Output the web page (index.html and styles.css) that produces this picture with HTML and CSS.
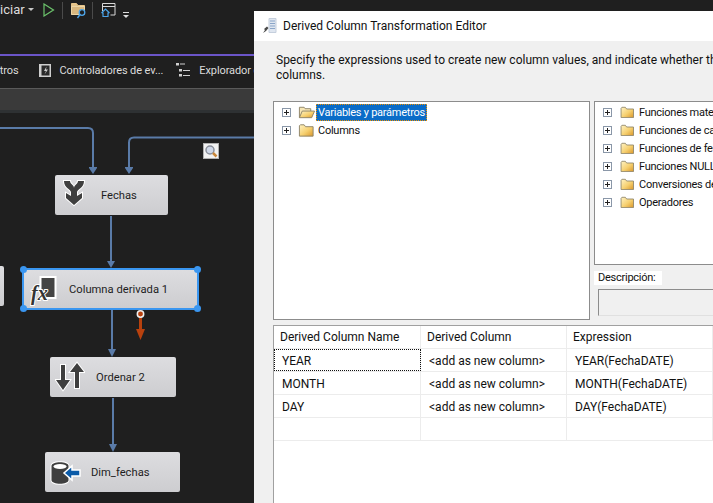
FILE: index.html
```html
<!DOCTYPE html>
<html lang="es">
<head>
  <meta charset="UTF-8" />
  <title>Derived Column Transformation Editor</title>
  <link rel="stylesheet" href="styles.css">
</head>
<body>

<svg class="defs" width="0" height="0">
  <defs>
    <linearGradient id="folder-fill" x1="0" y1="0" x2="1" y2="1">
      <stop offset="0" stop-color="#fff3c4"/>
      <stop offset="0.55" stop-color="#f6d070"/>
      <stop offset="1" stop-color="#d9962a"/>
    </linearGradient>
    <g id="closed-folder">
      <path d="M1.500 13.500V2.500l1-1h4l1.500 2h8v10z" fill="url(#folder-fill)" stroke="#8d8468"/>
    </g>
  </defs>
</svg>

<div class="ide">
  <div class="toolbar">
    <span class="tb-text">iciar</span>
    <span class="caret"></span>
    <svg class="tb-play" width="12" height="14" viewBox="0 0 12 14"><path d="M1 1 L1 13 L10.500 7 Z" fill="none" stroke="#6cc36c" stroke-width="1.200"/></svg>
    <span class="tb-sep"></span>
    <svg class="tb-icon" width="16" height="16" viewBox="0 0 16 16"><path d="M.5 11.500V.5h5l1.500 2h6.500v4" fill="#e6c48a" stroke="#e6c48a"/><path d="M.5 3.500h13v8H.5z" fill="#d9b77e" stroke="#ecd5a5"/><circle cx="11" cy="9.500" r="2.800" fill="#1f1f1f" stroke="#4aa3e8" stroke-width="1.300"/><path d="M9 11.500 L6.500 15" stroke="#4aa3e8" stroke-width="1.400"/></svg>
    <span class="tb-sep"></span>
    <svg class="tb-icon" width="15" height="14" viewBox="0 0 15 14"><path d="M1.500 8V.5h12.500v11.500H9.500M1.500 3.500h12.500" fill="none" stroke="#d8d8d8"/><path d="M.5 10 L4.500 6 L8.500 10 M2 9.500V13.500h5V9.500" fill="#1f1f1f" stroke="#4aa3e8" stroke-width="1.200"/></svg>
    <span class="tb-more"></span>
  </div>
  <div class="tabs">
    <span class="tab tab-first">etros</span>
    <span class="tab tab-events">
      <svg width="12" height="13" viewBox="0 0 12 13"><rect width="12" height="13" fill="#cfcfcf"/><rect x="2.500" y="1.500" width="8" height="10" fill="#2a2a2a"/><path d="M7.500 2.500 L5 7h2L5.500 10.500 L9 5.500H7z" fill="#cfcfcf"/></svg>
      Controladores de ev...
    </span>
    <span class="tab tab-explorer">
      <svg width="14" height="14" viewBox="0 0 14 14"><path d="M0 0h3v2.500H0zM3 6h3v2.500H3zM3 11h3v2.500H3z" fill="#d0d0d0"/><path d="M4 1h5M7 7.500h7M7 12.500h7" stroke="#d0d0d0"/></svg>
      Explorador d
    </span>
  </div>
  <div class="subbar"></div>

  <div class="canvas">
    <svg class="wires" width="254" height="390" viewBox="0 0 254 390">
      <g fill="none" stroke="#5a7ba8" stroke-width="2">
        <path d="M0 15 H88 Q93 15 93 20 V55"/>
        <path d="M254 24.500 H134 Q129 24.500 129 29.500 V55"/>
        <path d="M111 103 V150"/>
        <path d="M112 197 V238"/>
        <path d="M113 285 V333"/>
      </g>
      <g fill="#5a7ba8">
        <path d="M89 54 H97 V55 L93 61 L89 55 Z"/>
        <path d="M125 54 H133 V55 L129 61 L125 55 Z"/>
        <path d="M107 148 H115 L111 155 Z"/>
        <path d="M108 236 H116 L112 244 Z"/>
        <path d="M109 331 H117 L113 339 Z"/>
      </g>
      <path d="M140.500 201 V218" stroke="#b8410e" stroke-width="3"/>
      <path d="M136 216 H145 L140.500 227 Z" fill="#b8410e"/>
      <circle cx="140.500" cy="201" r="3.200" fill="#b8410e" stroke="#f0f0f0" stroke-width="1.500"/>
    </svg>

    <div class="zoom-btn">
      <svg width="14" height="14" viewBox="0 0 14 14"><circle cx="6" cy="6" r="4" fill="#cfd8e8" stroke="#8a8f9a" stroke-width="1.500"/><path d="M9 9 L12.500 12.500" stroke="#c9873a" stroke-width="2.500"/></svg>
    </div>

    <div class="node node-stub"></div>

    <div class="node node-fechas">
      <svg class="node-icon" width="24" height="28" viewBox="0 0 24 28"><path class="glyph" d="M2 2H8C8 5 12 6 12 9C12 6 16 5 16 2H22C22 9 15.500 10 15 13V17L20 14V19L12 26L4 19V14L9 17V13C8.500 10 2 9 2 2Z"/></svg>
      <span class="node-label">Fechas</span>
    </div>

    <div class="node node-columna">
      <span class="handle h-tl"></span><span class="handle h-tr"></span><span class="handle h-bl"></span><span class="handle h-br"></span>
      <svg class="node-icon" width="28" height="30" viewBox="0 0 28 30"><rect x="10.500" y="1" width="15" height="21" fill="#444" stroke="#fff" stroke-width="2"/><text x="1" y="24" class="fx-glyph">fx</text></svg>
      <span class="node-label">Columna derivada 1</span>
    </div>

    <div class="node node-ordenar">
      <svg class="node-icon" width="30" height="31" viewBox="0 0 30 31"><path class="glyph" d="M6 4h4v15h5L8 29L1 19h5z"/><path class="glyph" d="M20 27V11h-5L22 2l7 9h-5v16z"/></svg>
      <span class="node-label">Ordenar 2</span>
    </div>

    <div class="node node-dim">
      <svg class="node-icon" width="32" height="24" viewBox="0 0 32 24"><path class="glyph" d="M1.500 5c0-5 17-5 17 0v14c0 5-17 5-17 0z"/><ellipse cx="10" cy="5.500" rx="6.500" ry="2.500" fill="#fff"/><path d="M30 9h-8V5l-8 7 8 7v-4h8z" fill="#0a5aa8" stroke="#fff" stroke-width="1.500"/></svg>
      <span class="node-label">Dim_fechas</span>
    </div>
  </div>
</div>

<div class="dialog">
  <div class="dlg-title">
    <svg width="16" height="16" viewBox="0 0 16 16"><path d="M7 .5h7v14H7z" fill="#dfe6f0" stroke="#c5cfdd"/><path d="M8 3h5M8 5.500h5M8 8h5M8 10.500h5" stroke="#8aa5c8"/><path d="M1 15 L3 12 L2 11 L5 8.500 L6.500 10 L4 13 Z" fill="#4a4a4a"/></svg>
    <span>Derived Column Transformation Editor</span>
  </div>
  <div class="dlg-body">
    <p class="dlg-intro">Specify the expressions used to create new column values, and indicate whether the<br>columns.</p>

    <div class="panes">
      <div class="tree tree-left">
        <div class="tree-row">
          <span class="plus"></span>
          <svg class="folder" width="17" height="14" viewBox="0 0 18 14"><path d="M1.500 13V2h5l1 1.500h6V6" fill="#f7e6b4" stroke="#8d8468"/><path d="M1.500 13 L4.500 6h13l-3 7z" fill="url(#folder-fill)" stroke="#8d8468"/></svg>
          <span class="tree-label selected">Variables y parámetros</span>
        </div>
        <div class="tree-row">
          <span class="plus"></span>
          <svg class="folder" width="17" height="14" viewBox="0 0 18 14"><use href="#closed-folder"/></svg>
          <span class="tree-label">Columns</span>
        </div>
      </div>
      <div class="side">
        <div class="tree tree-right">
          <div class="tree-row"><span class="plus"></span><svg class="folder" width="17" height="12" viewBox="0 0 18 14"><use href="#closed-folder"/></svg><span class="tree-label">Funciones matemáticas</span></div>
          <div class="tree-row"><span class="plus"></span><svg class="folder" width="17" height="12" viewBox="0 0 18 14"><use href="#closed-folder"/></svg><span class="tree-label">Funciones de cadena</span></div>
          <div class="tree-row"><span class="plus"></span><svg class="folder" width="17" height="12" viewBox="0 0 18 14"><use href="#closed-folder"/></svg><span class="tree-label">Funciones de fecha</span></div>
          <div class="tree-row"><span class="plus"></span><svg class="folder" width="17" height="12" viewBox="0 0 18 14"><use href="#closed-folder"/></svg><span class="tree-label">Funciones NULL</span></div>
          <div class="tree-row"><span class="plus"></span><svg class="folder" width="17" height="12" viewBox="0 0 18 14"><use href="#closed-folder"/></svg><span class="tree-label">Conversiones de tipo</span></div>
          <div class="tree-row"><span class="plus"></span><svg class="folder" width="17" height="12" viewBox="0 0 18 14"><use href="#closed-folder"/></svg><span class="tree-label">Operadores</span></div>
        </div>
        <div class="desc-label">Descripción:</div>
        <div class="desc-box"></div>
      </div>
    </div>

    <div class="grid">
      <div class="grid-row grid-head"><div>Derived Column Name</div><div>Derived Column</div><div>Expression</div></div>
      <div class="grid-row"><div class="focused">YEAR</div><div>&lt;add as new column&gt;</div><div>YEAR(FechaDATE)</div></div>
      <div class="grid-row"><div>MONTH</div><div>&lt;add as new column&gt;</div><div>MONTH(FechaDATE)</div></div>
      <div class="grid-row"><div>DAY</div><div>&lt;add as new column&gt;</div><div>DAY(FechaDATE)</div></div>
      <div class="grid-row"><div></div><div></div><div></div></div>
    </div>
  </div>
</div>

</body>
</html>
```

FILE: styles.css
```css
* {
  box-sizing: border-box;
}
html, body {
  margin: 0;
  height: 100%;
}
body {
  display: flex;
  width: 713px;
  height: 503px;
  overflow: hidden;
  background-color: #1f1f1f;
  font-family: Roboto, "Liberation Sans", Arial, sans-serif;
  font-size: 11.2px;
}
.defs {
  position: absolute;
}

/* left side, the designer */
.ide {
  flex: 0 0 254px;
  display: flex;
  flex-direction: column;
  overflow: hidden;
  color: #dcdcdc;
}
.toolbar {
  height: 54px;
  padding: 2px 0 0;
  display: flex;
  align-items: flex-start;
  background-color: #1f1f1f;
}
.tb-text {
  width: 21px;
  font-size: 13px;
  line-height: 15px;
}
.caret {
  margin: 6px 0 0 7px;
  border: 3px solid transparent;
  border-top: 3px solid #c8c8c8;
}
.tb-play {
  margin: 1px 0 0 9px;
}
.tb-sep {
  width: 1px;
  height: 17px;
  margin: 0 8px 0 7px;
  background-color: #4a4a4a;
}
.tb-icon {
  margin: 1px -2px 0 0;
}
.tb-more {
  position: relative;
  width: 6px;
  height: 1px;
  margin: 10px 0 0 9px;
  background-color: #ddd;
}
.tb-more::after {
  content: "";
  position: absolute;
  left: 0;
  top: 3px;
  border: 3px solid transparent;
  border-top: 3px solid #ddd;
}
.tabs {
  height: 35px;
  padding-bottom: 4px;
  border-top: 2px solid #6b55c8;
  border-bottom: 1px solid #5a5a5a;
  display: flex;
  align-items: center;
  white-space: nowrap;
  background-color: #1f1f1f;
  font-size: 11px;
  letter-spacing: -.1px;
}
.tab {
  display: flex;
  align-items: center;
  gap: 9px;
}
.tab svg {
  flex: none;
}
.tab-first {
  width: 25px;
  margin-left: -6px;
}
.tab-events {
  margin-left: 20px;
  width: 125px;
}
.tab-explorer {
  margin-left: 13px;
}
.subbar {
  height: 24px;
  background-color: #3a3a3a;
  border-bottom: 3px solid #2e3133;
}
.canvas {
  position: relative;
  flex: 1;
  color: #1e1e1e;
}
.wires {
  position: absolute;
  left: 0;
  top: 0;
}
.zoom-btn {
  position: absolute;
  left: 203px;
  top: 30px;
  width: 16px;
  height: 16px;
  display: flex;
  align-items: center;
  justify-content: center;
  background-color: #f2f2f2;
  border: 1px solid #b0b0b0;
}
.node {
  position: absolute;
  height: 40px;
  display: flex;
  align-items: center;
  border-radius: 2px;
  background: linear-gradient(#dddde0, #cdcdd0);
  white-space: nowrap;
}
.node-label {
  margin-left: 46px;
}
.node-stub {
  left: -10px;
  top: 153px;
  width: 14px;
}
.node-fechas {
  left: 55px;
  top: 62px;
  width: 113px;
}
.node-columna {
  left: 22px;
  top: 155px;
  width: 177px;
  height: 42px;
  border: 2px solid #3a96f0;
}
.node-columna .node-label {
  margin-left: 45px;
}
.node-ordenar {
  left: 50px;
  top: 244px;
  width: 126px;
}
.node-dim {
  left: 45px;
  top: 339px;
  width: 135px;
}
.node-icon {
  position: absolute;
  left: 7px;
  top: 4px;
}
.node-columna .node-icon {
  left: 6px;
  top: 6px;
}
.node-ordenar .node-icon {
  left: 5px;
  top: 4px;
}
.node-dim .node-icon {
  left: 5px;
  top: 9px;
}
.glyph {
  fill: #3f3f3f;
  stroke: #fff;
  stroke-width: 2px;
  paint-order: stroke;
}
.fx-glyph {
  font-family: "Liberation Serif", serif;
  font-style: italic;
  font-weight: bold;
  font-size: 20px;
  fill: #333;
  stroke: #fff;
  stroke-width: 2px;
  paint-order: stroke;
}
.handle {
  position: absolute;
  width: 7px;
  height: 7px;
  border-radius: 50%;
  background-color: #3a96f0;
}
.h-tl { left: -4px; top: -4px; }
.h-tr { right: -4px; top: -4px; }
.h-bl { left: -4px; bottom: -4px; }
.h-br { right: -4px; bottom: -4px; }

/* right side, the dialog */
.dialog {
  flex: 0 0 459px;
  margin-top: 11px;
  display: flex;
  flex-direction: column;
  color: #111;
  background-color: #f0f0f0;
  font-size: 12px;
}
.dlg-title {
  height: 30px;
  padding-left: 8px;
  display: flex;
  align-items: center;
  gap: 5px;
  background-color: #fff;
}
.dlg-body {
  flex: 1;
  padding: 12px 0 0 19px;
  overflow: hidden;
}
.dlg-intro {
  margin: 0 0 18px 3px;
  white-space: nowrap;
  line-height: 15px;
}
.panes {
  display: flex;
  gap: 4px;
  height: 219px;
}
.tree {
  background-color: #fff;
  border: 1px solid #8c8c8c;
  padding-top: 1px;
}
.tree-left {
  flex: 0 0 317px;
}
.side {
  flex: 0 0 125px;
  display: flex;
  flex-direction: column;
}
.tree-right {
  height: 164px;
  border-right: 0;
}
.tree-row {
  height: 18px;
  display: flex;
  align-items: center;
  white-space: nowrap;
}
.plus {
  position: relative;
  flex: none;
  width: 9px;
  height: 9px;
  margin: 0 7px 0 8px;
  border: 1px solid #8a97a8;
  background-color: #fff;
}
.plus::before {
  content: "";
  position: absolute;
  left: 1px;
  top: 3px;
  width: 5px;
  height: 1px;
  background-color: #222;
}
.plus::after {
  content: "";
  position: absolute;
  left: 3px;
  top: 1px;
  width: 1px;
  height: 5px;
  background-color: #222;
}
.folder {
  flex: none;
  margin-right: 1px;
}
.tree-label {
  padding: 0 2px;
  font-size: 11px;
  letter-spacing: -.25px;
  line-height: 17px;
}
.selected {
  background-color: #0a6cc8;
  color: #fff;
  outline: 1px dotted #f09000;
  outline-offset: -1px;
}
.desc-label {
  width: 68px;
  height: 14px;
  margin-top: 6px;
  padding-left: 4px;
  background-color: #fff;
  font-size: 11px;
  letter-spacing: -.25px;
  line-height: 14px;
}
.desc-box {
  height: 27px;
  margin: 4px 0 0 4px;
  background-color: #f0f0f0;
  border: 1px solid #8c8c8c;
  border-right: 0;
  border-bottom-color: #e0e0e0;
}
.grid {
  height: 200px;
  margin-top: 5px;
  background-color: #fff;
  border: 1px solid #a0a0a0;
  border-right: 0;
}
.grid-row {
  display: flex;
  height: 23px;
  border-bottom: 1px solid #ececec;
}
.grid-row div {
  width: 146px;
  padding-left: 8px;
  border-right: 1px solid #ececec;
  line-height: 24px;
  white-space: nowrap;
}
.grid-row div:first-child {
  width: 147px;
}
.grid-head div {
  padding-left: 6px;
  line-height: 22px;
}
.focused {
  outline: 1px dotted #111;
  outline-offset: -1px;
}
```
